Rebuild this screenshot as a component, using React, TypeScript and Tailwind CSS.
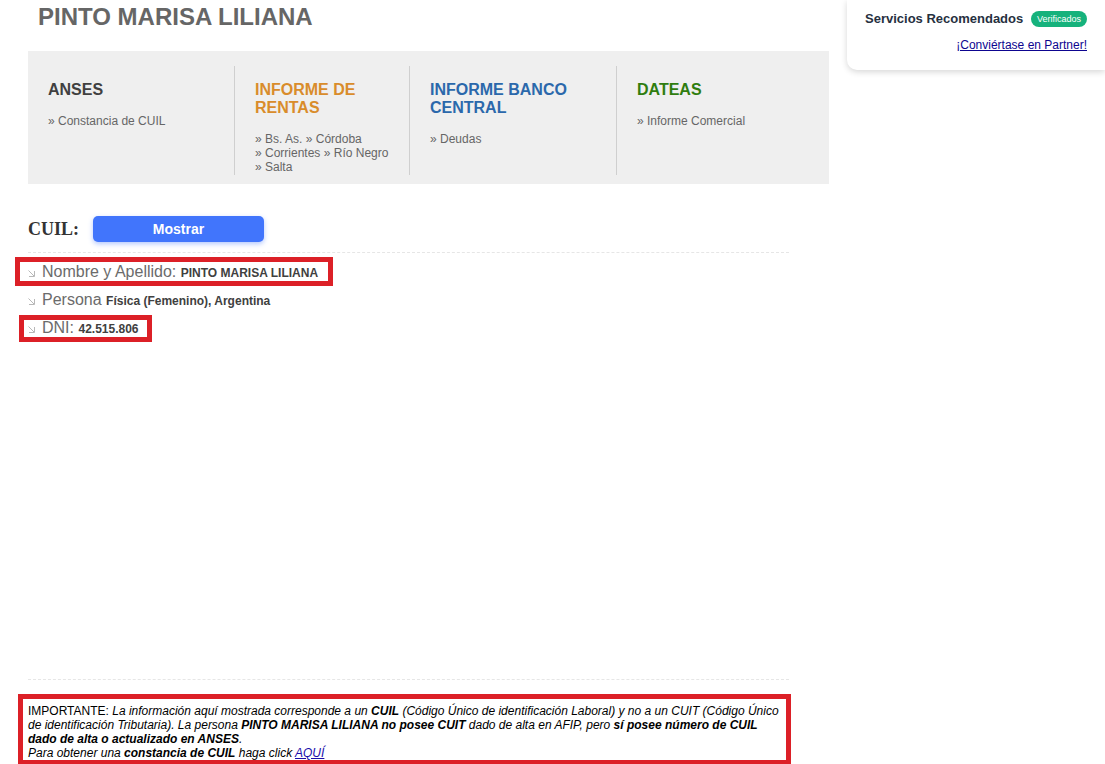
import React from "react";

type ReportColumn = {
  title: string;
  color: string;
  links: string[];
};

const columns: ReportColumn[] = [
  { title: "ANSES", color: "text-[#404040]", links: ["Constancia de CUIL"] },
  {
    title: "INFORME DE RENTAS",
    color: "text-[#d98c2b]",
    links: ["Bs. As.", "Córdoba", "Corrientes", "Río Negro", "Salta"],
  },
  { title: "INFORME BANCO CENTRAL", color: "text-[#2b68ab]", links: ["Deudas"] },
  { title: "DATEAS", color: "text-[#2f7d0f]", links: ["Informe Comercial"] },
];

function Bullet() {
  return (
    <svg
      className="mr-[7px] mt-[3px] h-[7px] w-[7px] shrink-0"
      viewBox="0 0 7 7"
      fill="none"
      stroke="#b0b0b0"
      aria-hidden="true"
    >
      <path d="M0.5 0.5 L6 6" strokeWidth="0.9" />
      <path d="M6.5 1 V6.5 H1" strokeWidth="0.9" />
    </svg>
  );
}

type FactProps = {
  label: string;
  value: string;
  frame?: string;
};

function Fact({ label, value, frame }: FactProps) {
  return (
    <li className="flex h-7 items-center">
      <div className="relative flex items-center">
        <Bullet />
        <p className="text-base leading-7 text-[#6b6b6b]">
          {label} <strong className="text-xs text-[#404040]">{value}</strong>
        </p>
        {frame && (
          <span className={`pointer-events-none absolute border-5 border-[#dc2027] ${frame}`} />
        )}
      </div>
    </li>
  );
}

export default function App() {
  return (
    <div className="flex min-h-screen items-stretch bg-white font-['Liberation_Sans',Arial,sans-serif] text-xs text-[#666]">
      <main className="flex min-w-0 flex-1 flex-col pl-7 pr-[18px]">
        <h1 className="mt-[3px] pl-[10px] text-2xl leading-7 font-bold text-[#666]">
          PINTO MARISA LILIANA
        </h1>

        <nav
          aria-label="Informes"
          className="mt-5 grid grid-cols-[207fr_175fr_207fr_212fr] bg-[#efefef] pt-[15px] pb-[9px]"
        >
          {columns.map((column) => (
            <section
              key={column.title}
              className="border-r border-[#cfcfcf] pt-[15px] pr-4 pb-px pl-5 last:border-r-0"
            >
              <h2 className={`text-base leading-[18px] font-bold ${column.color}`}>{column.title}</h2>
              <p className="mt-[15px] leading-[14px]">
                {column.links.map((link) => (
                  <React.Fragment key={link}>
                    <a href="#" className="whitespace-nowrap">
                      » {link}
                    </a>{" "}
                  </React.Fragment>
                ))}
              </p>
            </section>
          ))}
        </nav>

        <div className="mr-10 flex flex-1 flex-col">
          <div className="mt-8 flex items-center border-b border-dashed border-[#e6e6e6] pb-[10px]">
            <span className="w-[65px] font-['Liberation_Serif','Times_New_Roman',serif] text-lg leading-[26px] font-bold text-[#333]">
              CUIL:
            </span>
            <button
              type="button"
              className="h-[26px] w-[171px] rounded-[5px] bg-[#4175fc] text-sm font-bold text-white shadow-[0_2px_5px_rgba(65,117,252,0.4)]"
            >
              Mostrar
            </button>
          </div>

          <ul className="mt-[5px]">
            <Fact
              label="Nombre y Apellido:"
              value="PINTO MARISA LILIANA"
              frame="-top-px bottom-0 -left-[13px] -right-[15px]"
            />
            <Fact label="Persona" value="Física (Femenino), Argentina" />
            <Fact label="DNI:" value="42.515.806" frame="top-px bottom-0 -left-[9px] -right-[13px]" />
          </ul>

          <div className="mt-auto">
            <hr className="border-t border-dashed border-[#e6e6e6]" />
            <div className="mt-[14px] -mr-[2px] -ml-[10px] border-5 border-b-4 border-[#dc2027] pt-[5px] pr-1 pl-[5px] leading-[14px] text-black italic">
              <p>
                <span className="not-italic">IMPORTANTE:</span> La información aquí mostrada
                corresponde a un <strong>CUIL</strong> (Código Único de identificación Laboral) y no a
                un CUIT (Código Único de identificación Tributaria). La persona{" "}
                <strong>PINTO MARISA LILIANA no posee CUIT</strong> dado de alta en AFIP, pero{" "}
                <strong>sí posee número de CUIL dado de alta o actualizado en ANSES</strong>.
              </p>
              <p>
                Para obtener una <strong>constancia de CUIL</strong> haga click{" "}
                <a href="#" className="text-[#1a0dab] underline">
                  AQUÍ
                </a>
              </p>
            </div>
          </div>
        </div>
      </main>

      <aside className="w-[258px] shrink-0 self-start rounded-bl-[10px] bg-white pt-[10px] pr-[18px] pb-[18px] pl-[18px] shadow-[0_2px_6px_rgba(0,0,0,0.16)]">
        <div className="flex items-center justify-between">
          <h2 className="text-[13px] leading-[18px] font-bold whitespace-nowrap text-[#263040]">
            Servicios Recomendados
          </h2>
          <span className="rounded-full bg-[#16b27c] px-[6px] text-[9px] leading-4 text-white">
            Verificados
          </span>
        </div>
        <p className="mt-[10px] text-right leading-[14px]">
          <a href="#" className="text-[#0d0590] underline">
            ¡Conviértase en Partner!
          </a>
        </p>
      </aside>
    </div>
  );
}
